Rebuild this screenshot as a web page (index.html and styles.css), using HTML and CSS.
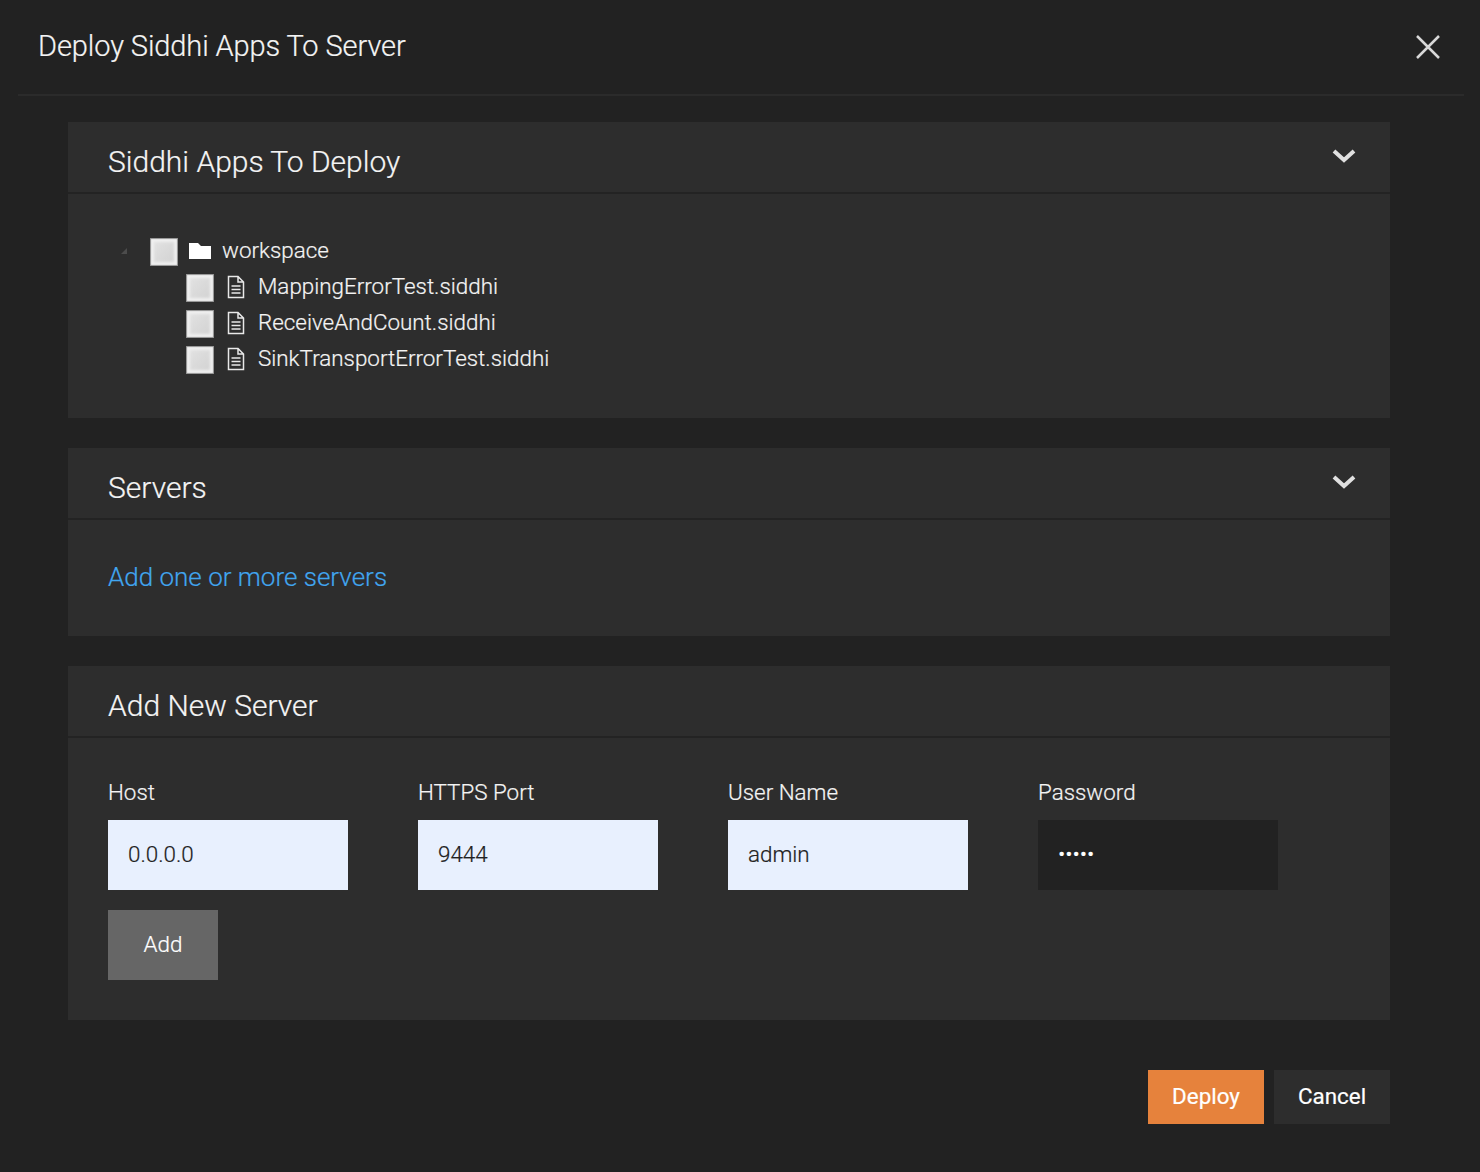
FILE: index.html
```html
<!DOCTYPE html>
<html lang="en">
<head>
  <meta charset="UTF-8" />
  <title>Deploy Siddhi Apps To Server</title>
  <link rel="stylesheet" href="styles.css">
</head>

<body>
  <div class="modal">
    <div class="modal-header">
      <h1>Deploy Siddhi Apps To Server</h1>
      <svg class="close-icon" width="26" height="26" viewBox="0 0 26 26"><path d="M2 2 L24 24 M24 2 L2 24" /></svg>
    </div>

    <div class="modal-body">
      <section class="panel">
        <div class="panel-head">
          <h2>Siddhi Apps To Deploy</h2>
          <svg class="chevron" width="26" height="16" viewBox="0 0 26 16"><path d="M3 3 L13 12 L23 3" /></svg>
        </div>
        <div class="panel-content tree">
          <div class="tree-row">
            <svg class="tree-arrow" width="8" height="8" viewBox="0 0 8 8"><path d="M7 1 V7 H1 Z" /></svg>
            <span class="check"></span>
            <svg class="folder" width="24" height="18" viewBox="0 0 24 18"><path d="M1 1 H10 L13 4 H23 V17 H1 Z" /></svg>
            <span class="tree-label">workspace</span>
          </div>
          <div class="tree-row child">
            <span class="check"></span>
            <svg class="file" width="18" height="24" viewBox="0 0 18 24"><path d="M1.5 1.5 H11 L16.5 7 V22.5 H1.5 Z M11 1.5 V7 H16.5 M4.5 11 H13.5 M4.5 14.5 H13.5 M4.5 18 H13.5" /></svg>
            <span class="tree-label">MappingErrorTest.siddhi</span>
          </div>
          <div class="tree-row child">
            <span class="check"></span>
            <svg class="file" width="18" height="24" viewBox="0 0 18 24"><path d="M1.5 1.5 H11 L16.5 7 V22.5 H1.5 Z M11 1.5 V7 H16.5 M4.5 11 H13.5 M4.5 14.5 H13.5 M4.5 18 H13.5" /></svg>
            <span class="tree-label">ReceiveAndCount.siddhi</span>
          </div>
          <div class="tree-row child">
            <span class="check"></span>
            <svg class="file" width="18" height="24" viewBox="0 0 18 24"><path d="M1.5 1.5 H11 L16.5 7 V22.5 H1.5 Z M11 1.5 V7 H16.5 M4.5 11 H13.5 M4.5 14.5 H13.5 M4.5 18 H13.5" /></svg>
            <span class="tree-label">SinkTransportErrorTest.siddhi</span>
          </div>
        </div>
      </section>

      <section class="panel">
        <div class="panel-head">
          <h2>Servers</h2>
          <svg class="chevron" width="26" height="16" viewBox="0 0 26 16"><path d="M3 3 L13 12 L23 3" /></svg>
        </div>
        <div class="panel-content servers">
          <a class="add-link" href="#">Add one or more servers</a>
        </div>
      </section>

      <section class="panel">
        <div class="panel-head">
          <h2>Add New Server</h2>
        </div>
        <div class="panel-content server-form">
          <div class="fields">
            <div class="field">
              <label>Host</label>
              <input type="text" value="0.0.0.0">
            </div>
            <div class="field">
              <label>HTTPS Port</label>
              <input type="text" value="9444">
            </div>
            <div class="field">
              <label>User Name</label>
              <input type="text" value="admin">
            </div>
            <div class="field">
              <label>Password</label>
              <input class="password" type="password" value="admin">
            </div>
          </div>
          <button class="btn-add">Add</button>
        </div>
      </section>

      <div class="actions">
        <button class="btn-deploy">Deploy</button>
        <button class="btn-cancel">Cancel</button>
      </div>
    </div>
  </div>
</body>
</html>
```

FILE: styles.css
```css
* {
  box-sizing: border-box;
}

html, body {
  height: 100%;
}

body {
  margin: 0;
  background: #222222;
  color: #f4f4f4;
  font-family: Roboto, "Liberation Sans", sans-serif;
  overflow: hidden;
  -webkit-text-stroke: 0.2px;
}

.modal {
  padding: 0 16px 0 18px;
}

.modal-header {
  display: flex;
  justify-content: space-between;
  align-items: center;
  height: 96px;
  padding: 0 23px 2px 20px;
  border-bottom: 2px solid #2b2b2b;
}

.modal-header h1 {
  margin: 0;
  font-size: 29px;
  font-weight: 300;
  letter-spacing: -0.1px;
}

.close-icon {
  margin-top: 1px;
}

.close-icon path {
  fill: none;
  stroke: #d8d8d8;
  stroke-width: 2.5;
}

.modal-body {
  padding: 26px 74px 0 50px;
}

.panel {
  background: #2d2d2d;
  margin-bottom: 30px;
}

.panel-head {
  position: relative;
  height: 72px;
  padding: 20px 40px 0;
  border-bottom: 2px solid #232323;
}

.panel-head h2 {
  margin: 0;
  font-size: 30px;
  line-height: 40px;
  font-weight: 300;
}

.chevron {
  position: absolute;
  right: 33px;
  top: 26px;
  filter: blur(0.6px);
}

.chevron path {
  fill: none;
  stroke: #e0e0e0;
  stroke-width: 4;
}

.tree {
  height: 224px;
  padding: 38px 0 0 52px;
}

.tree-row {
  display: flex;
  align-items: center;
  height: 36px;
  font-size: 22.4px;
  font-weight: 300;
}

.tree-row.child {
  padding-left: 66px;
}

.tree-arrow {
  margin: 1px 22px 0 0;
}

.tree-arrow path {
  fill: #4c4c4c;
}

.check {
  width: 28px;
  height: 28px;
  flex: none;
  margin-top: 4px;
  background: linear-gradient(135deg, #e4e4e4, #d0d0d0);
  box-shadow: inset 0 0 1px 1px #8f8f8f, inset 0 0 3px 4px #f0f0f0;
  filter: blur(0.5px);
}

.folder {
  margin: 2px 10px 0;
}

.folder path {
  fill: #ffffff;
}

.file {
  margin: 2px 13px 0;
}

.file path {
  fill: none;
  stroke: #e8e8e8;
  stroke-width: 1.5;
}

.servers {
  height: 116px;
  padding: 42px 40px 0;
}

.add-link {
  color: #41a6f0;
  font-size: 26px;
  font-weight: 300;
  text-decoration: none;
}

.server-form {
  padding: 40px 40px 40px;
}

.fields {
  display: flex;
  gap: 70px;
}

.field {
  width: 240px;
}

.field label {
  display: block;
  height: 42px;
  font-size: 22.4px;
  font-weight: 300;
  line-height: 28px;
}

.field input {
  display: block;
  width: 240px;
  height: 70px;
  padding: 0 20px 2px;
  border: 0;
  border-radius: 0;
  background: #e8f0fe;
  color: #222222;
  font-family: inherit;
  font-size: 22.4px;
  font-weight: 300;
}

.field input.password {
  background: #222222;
  color: #ffffff;
}

.server-form button,
.actions button {
  border: 0;
  border-radius: 0;
  color: #ffffff;
  font-family: inherit;
  font-size: 22.4px;
  padding: 0 0 2px;
}

.btn-add {
  display: block;
  width: 110px;
  height: 70px;
  margin-top: 20px;
  background: #666666;
  font-weight: 300;
}

.actions {
  display: flex;
  justify-content: flex-end;
  gap: 10px;
  margin-top: 50px;
}

.actions button {
  width: 116px;
  height: 54px;
}

.btn-deploy {
  background: #e6823c;
}

.btn-cancel {
  background: #2d2d2d;
}
```
